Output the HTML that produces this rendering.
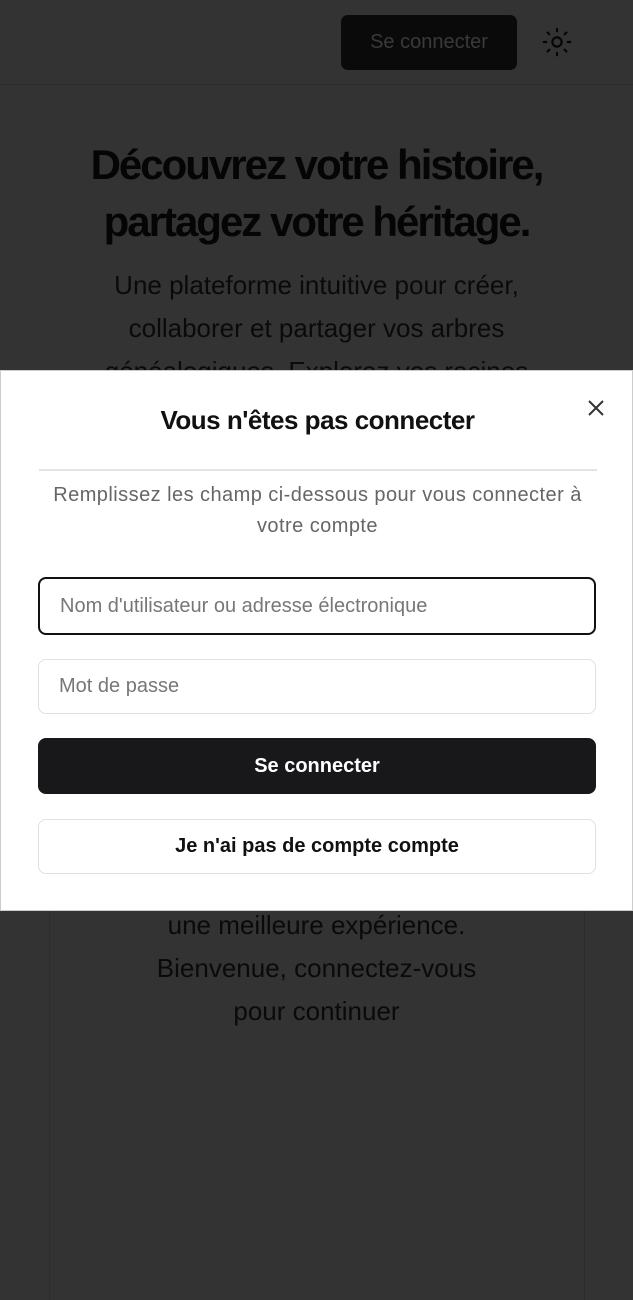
<!DOCTYPE html>
<html><head><meta charset="utf-8"><style>
*{box-sizing:border-box;margin:0;padding:0}
body{width:633px;height:1280px;background:#333;font-family:"Liberation Sans",sans-serif;position:relative;overflow:hidden}
.hdr{position:absolute;left:0;top:0;width:633px;height:85px;border-bottom:1px solid #2c2c2c}
.btn1{position:absolute;left:341px;top:15px;width:176px;height:55px;background:#0a0a0a;border-radius:7px;color:#3a3a3a;font-size:20px;text-align:center;line-height:55px}
.sun{position:absolute;left:541px;top:26px}
h1{position:absolute;top:136px;left:0;width:633px;text-align:center;font-size:42px;line-height:57px;letter-spacing:-2px;color:#050505;font-weight:bold}
.sub{position:absolute;top:264px;left:80px;width:473px;text-align:center;font-size:26px;line-height:43px;color:#0a0a0a}
.card{position:absolute;left:49px;top:880px;width:536px;height:420px;border-left:1px solid #2d2d2d;border-right:1px solid #2d2d2d}
.low{position:absolute;top:904px;left:0;width:633px;text-align:center;font-size:26px;line-height:43px;color:#0a0a0a}
.modal{position:absolute;left:0;top:370px;width:633px;height:541px;background:#fff;border:1px solid #ccc}
.title{position:absolute;top:34px;left:0;width:633px;text-align:center;font-size:26px;font-weight:bold;color:#111;letter-spacing:-0.5px}
.x{position:absolute;left:585px;top:27px}
.hr{position:absolute;left:38px;top:98px;width:558px;height:2px;background:#e4e4e7}
.desc{position:absolute;top:109px;left:20px;width:593px;text-align:center;font-size:20px;letter-spacing:0.45px;line-height:31px;color:#666;white-space:nowrap}
.in{position:absolute;left:37px;width:558px;border-radius:8px;font-size:20px;color:#777;padding-left:20px}
.b{position:absolute;left:37px;width:558px;border-radius:8px;text-align:center;font-size:20px;font-weight:bold}
</style></head><body>
<div class="hdr"><div class="btn1">Se connecter</div>
<svg class="sun" width="32" height="32" viewBox="0 0 24 24" fill="none" stroke="#050505" stroke-width="1.6" stroke-linecap="round"><circle cx="12" cy="12" r="3.5"/><path d="M12 2v2M12 20v2M4.9 4.9l1.4 1.4M17.7 17.7l1.4 1.4M2 12h2M20 12h2M6.3 17.7l-1.4 1.4M19.1 4.9l-1.4 1.4"/></svg></div>
<h1>Découvrez votre histoire,<br>partagez votre héritage.</h1>
<div class="sub">Une plateforme intuitive pour créer, collaborer et partager vos arbres généalogiques. Explorez vos racines</div>
<div class="card"></div>
<div class="low">une meilleure expérience.<br>Bienvenue, connectez-vous<br>pour continuer</div>
<div class="modal">
<div class="title">Vous n'êtes pas connecter</div>
<svg class="x" width="20" height="20" viewBox="0 0 20 20" stroke="#333" stroke-width="2"><path d="M3 3l14 14M17 3L3 17"/></svg>
<div class="hr"></div>
<div class="desc">Remplissez les champ ci-dessous pour vous connecter à<br>votre compte</div>
<div class="in" style="top:206px;height:58px;border:2px solid #111;line-height:54px">Nom d'utilisateur ou adresse électronique</div>
<div class="in" style="top:288px;height:55px;border:1px solid #e0e0e0;line-height:53px">Mot de passe</div>
<div class="b" style="top:367px;height:56px;background:#18181b;color:#fff;line-height:56px">Se connecter</div>
<div class="b" style="top:448px;height:55px;border:1px solid #e0e0e0;color:#111;line-height:53px">Je n'ai pas de compte compte</div>
</div>
</body></html>
